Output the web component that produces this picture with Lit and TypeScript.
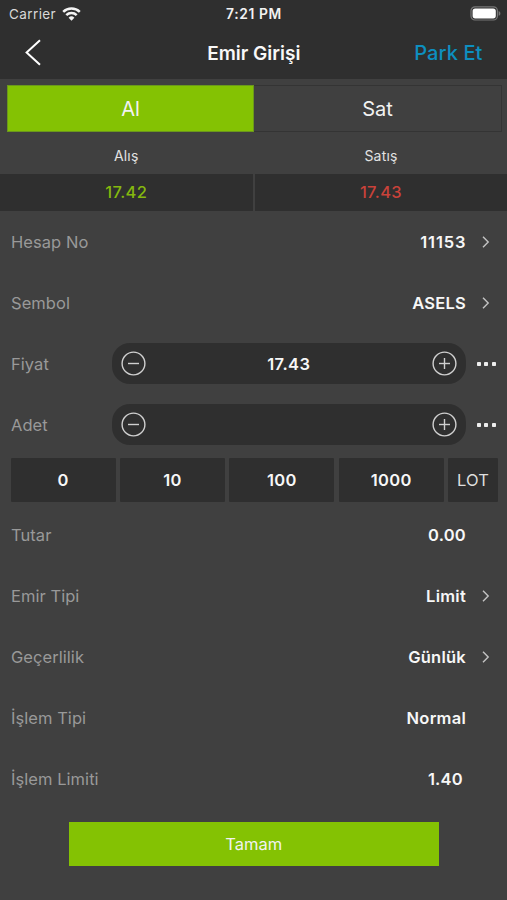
import { LitElement, html, css, svg, nothing } from "lit";
import { customElement, property } from "lit/decorators.js";

@customElement("form-row")
class FormRow extends LitElement {
  @property() label = "";
  @property() value = "";
  @property({ type: Boolean }) arrow = false;
  @property({ type: Boolean }) inset = false;

  static styles = css`
    :host { display: flex; align-items: center; height: 61px; padding: 0 17px 0 11px; box-sizing: border-box; }
    .label { color: #999; font-size: 16.5px; letter-spacing: 0.05px; flex: 1; }
    .value { color: #f7f7f7; font-size: 16.5px; font-weight: 600; letter-spacing: 0.25px; }
    .digits { letter-spacing: 0.9px; margin-right: -0.5px; }
    .inset { margin-right: 3px; }
    .slot { width: 24px; display: flex; justify-content: flex-end; }
    svg { display: block; margin-top: 1px; }
  `;

  render() {
    const digits = /^\d+$/.test(this.value) ? "digits" : "";
    return html`
      <span class="label">${this.label}</span>
      <span class="value ${digits} ${this.inset ? "inset" : ""}">${this.value}</span>
      <span class="slot">${this.arrow
        ? html`<svg width="8" height="12" viewBox="0 0 8 12" fill="none" stroke="#c4c4c4" stroke-width="1.4"><path d="M1 .8 6.2 6 1 11.2" /></svg>`
        : nothing}</span>
    `;
  }
}

@customElement("stepper-row")
class StepperRow extends LitElement {
  @property() label = "";
  @property() value = "";

  static styles = css`
    :host { display: flex; align-items: center; height: 61px; padding: 0 11px; box-sizing: border-box; }
    .label { color: #999; font-size: 16.5px; letter-spacing: 0.05px; width: 101px; }
    .field { width: 354px; height: 41px; border-radius: 18px; background: #2f2f2f; display: flex; align-items: center; justify-content: space-between; padding: 0 9px 0 8.5px; box-sizing: border-box; }
    .value { color: #f7f7f7; font-size: 16.5px; font-weight: 600; letter-spacing: 0.4px; }
    .dots { display: flex; gap: 3.5px; margin-left: 10.5px; }
    .dot { width: 4px; height: 4px; background: #eee; border-radius: 0.8px; }
    svg { display: block; }
  `;

  private knob(plus: boolean) {
    return html`<svg width="25" height="25" viewBox="0 0 25 25" fill="none" stroke="#d0d0d0" stroke-width="1.4">
      <circle cx="12.5" cy="12.5" r="11.4" />
      <path d="M7 12.5h11" />
      ${plus ? svg`<path d="M12.5 7v11" />` : nothing}
    </svg>`;
  }

  render() {
    return html`
      <span class="label">${this.label}</span>
      <div class="field">${this.knob(false)}<span class="value">${this.value}</span>${this.knob(true)}</div>
      <div class="dots"><i class="dot"></i><i class="dot"></i><i class="dot"></i></div>
    `;
  }
}

@customElement("app-root")
class AppRoot extends LitElement {
  static styles = css`
    :host { display: block; width: 507px; height: 900px; overflow: hidden; background: #404040; font-family: Inter, "Liberation Sans", sans-serif; color: #f2f2f2; }
    .top { background: #2f2f2f; height: 79px; }
    .status { display: grid; grid-template-columns: 1fr auto 1fr; align-items: center; height: 27px; padding: 0 6px 0 9px; font-size: 13.5px; }
    .carrier { display: flex; align-items: center; gap: 6px; letter-spacing: 0.4px; color: #d8d8d8; }
    .time { font-weight: 600; font-size: 13.8px; letter-spacing: 0.65px; margin-left: -2px; }
    .battery { justify-self: end; }
    .nav { display: grid; grid-template-columns: 1fr auto 1fr; align-items: center; height: 52px; padding: 0 24.5px 0 25px; }
    .title { font-size: 19px; font-weight: 600; color: #f8f8f8; }
    .park { justify-self: end; color: #0d8fc0; font-size: 20px; font-weight: 500; letter-spacing: 0.1px; }
    svg { display: block; }
    .tabs { display: flex; margin: 6px 5px 0 7px; height: 47px; }
    .tab { display: flex; align-items: center; justify-content: center; font-size: 20px; box-sizing: border-box; }
    .buy { width: 247px; background: #84c203; border: 1px solid #6b981c; }
    .sell { flex: 1; border: 1px solid #343434; border-left: 0; }
    .quotes { display: grid; grid-template-columns: 252.5px 252px; column-gap: 2.5px; margin-top: 6px; }
    .caption { height: 36px; padding-bottom: 1px; box-sizing: border-box; display: flex; align-items: center; justify-content: center; font-size: 14px; color: #e2e2e2; letter-spacing: 0.2px; }
    .price { height: 37px; display: flex; align-items: center; justify-content: center; padding-bottom: 1px; box-sizing: border-box; font-size: 16.5px; font-weight: 500; letter-spacing: 0.35px; background: #2f2f2f; }
    .up { color: #84b80e; }
    .down { color: #c9423a; }
    .chips { display: grid; grid-template-columns: repeat(4, 105px) 50px; column-gap: 4.4px; height: 44px; margin: 3px 0 2px 10.5px; }
    .chip { display: flex; align-items: center; justify-content: center; background: #2f2f2f; font-size: 16.5px; font-weight: 600; letter-spacing: 0.3px; border-radius: 1px; color: #f7f7f7; }
    .lot { font-weight: 400; color: #dedede; letter-spacing: 0.1px; }
    .submit { margin: 12.5px 0 0 69px; width: 369.5px; height: 44px; display: flex; align-items: center; justify-content: center; background: #84c203; font-size: 16.5px; }
  `;

  render() {
    return html`
      <header class="top">
        <div class="status">
          <div class="carrier"><span>Carrier</span>
            <svg width="19" height="14" viewBox="0 0 19 14" fill="none" stroke="#f4f4f4" stroke-width="2.5">
              <path d="M1.2 4.8a11.8 11.8 0 0 1 16.6 0" />
              <path d="M4.3 8.1a7.4 7.4 0 0 1 10.4 0" />
              <path d="M9.5 13.8 6.6 10.8a4.1 4.1 0 0 1 5.8 0Z" fill="#f4f4f4" stroke="none" />
            </svg>
          </div>
          <div class="time">7:21 PM</div>
          <svg class="battery" width="31" height="15" viewBox="0 0 31 15">
            <rect x="1" y=".8" width="26.4" height="13.2" rx="4" fill="none" stroke="#777" stroke-width="1.2" />
            <rect x="2.6" y="2.4" width="23.2" height="10" rx="2.6" fill="#fff" />
            <path d="M28.6 5v4.8c1.2-.5 1.8-1.3 1.8-2.4s-.6-1.9-1.8-2.4Z" fill="#777" />
          </svg>
        </div>
        <div class="nav">
          <svg width="18" height="28" viewBox="0 0 18 28" fill="none" stroke="#fff" stroke-width="2"><path d="M15 1.3 1.6 13.5 15 25.7" /></svg>
          <div class="title">Emir Girişi</div>
          <div class="park">Park Et</div>
        </div>
      </header>
      <div class="tabs"><div class="tab buy">Al</div><div class="tab sell">Sat</div></div>
      <div class="quotes">
        <div class="caption">Alış</div><div class="caption">Satış</div>
        <div class="price up">17.42</div><div class="price down">17.43</div>
      </div>
      <form-row label="Hesap No" value="11153" arrow></form-row>
      <form-row label="Sembol" value="ASELS" arrow></form-row>
      <stepper-row label="Fiyat" value="17.43"></stepper-row>
      <stepper-row label="Adet"></stepper-row>
      <div class="chips">
        ${["0", "10", "100", "1000"].map((n) => html`<div class="chip">${n}</div>`)}
        <div class="chip lot">LOT</div>
      </div>
      <form-row label="Tutar" value="0.00"></form-row>
      <form-row label="Emir Tipi" value="Limit" arrow></form-row>
      <form-row label="Geçerlilik" value="Günlük" arrow></form-row>
      <form-row label="İşlem Tipi" value="Normal"></form-row>
      <form-row label="İşlem Limiti" value="1.40" inset></form-row>
      <div class="submit">Tamam</div>
    `;
  }
}
